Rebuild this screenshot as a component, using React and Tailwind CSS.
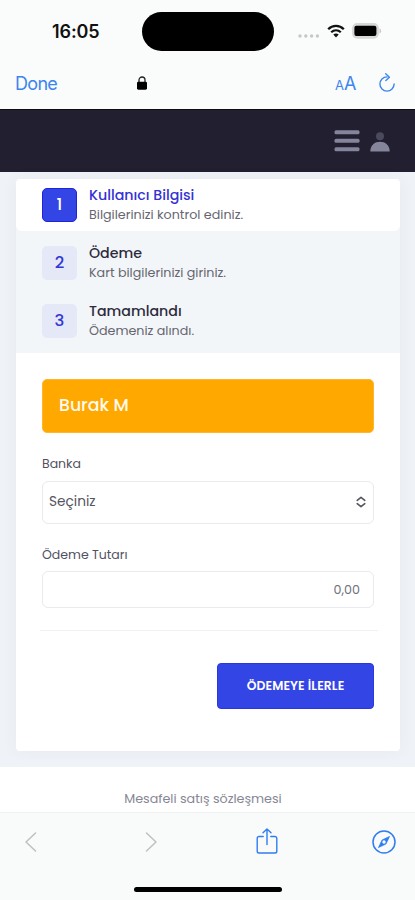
import React from 'react';
import { clsx } from 'clsx';

const steps = [
  { no: 1, title: 'Kullanıcı Bilgisi', desc: 'Bilgilerinizi kontrol ediniz.', active: true },
  { no: 2, title: 'Ödeme', desc: 'Kart bilgilerinizi giriniz.' },
  { no: 3, title: 'Tamamlandı', desc: 'Ödemeniz alındı.' },
];

const StatusBar = () => (
  <div className="h-[62px] flex items-center">
    <div className="w-[142px] pl-[52px] pt-[2px] text-[18px] leading-[20px] font-semibold text-[#111] tracking-[-0.1px]">16:05</div>
    <div className="w-[132px] h-[39px] mt-[1px] rounded-full bg-black" />
    <div className="flex items-center pl-[24px]">
      <svg width="22" height="6" viewBox="0 0 22 6" fill="#c6c8c8" className="mt-[9px]">
        <circle cx="2" cy="3" r="1.7" />
        <circle cx="7.8" cy="3" r="1.7" />
        <circle cx="13.6" cy="3" r="1.7" />
        <circle cx="19.4" cy="3" r="1.7" />
      </svg>
      <svg width="18" height="14" viewBox="0 0 18 14" fill="none" stroke="#111" className="ml-[7px]">
        <path d="M1.2 5.2C5.5 0.8 12.5 0.8 16.8 5.2" strokeWidth="2.3" />
        <path d="M4.2 8.3C7 5.6 11 5.6 13.8 8.3" strokeWidth="2.2" />
        <path d="M9 13.4L6.3 10.5C7.8 9.1 10.2 9.1 11.7 10.5Z" fill="#111" stroke="none" />
      </svg>
      <svg width="30" height="16" viewBox="0 0 30 16" className="ml-[7px]">
        <rect x="0.8" y="0.8" width="25.4" height="14.2" rx="4.4" fill="#d6d8d8" stroke="#d6d8d8" strokeWidth="1.4" />
        <rect x="2.4" y="2.8" width="22" height="10.2" rx="2" fill="#000" />
        <path d="M27.5 5.5v5c2.2-1 2.2-4 0-5Z" fill="#c6c8c8" />
      </svg>
    </div>
  </div>
);

const BrowserBar = () => (
  <div className="h-[47px] flex items-start text-[#3d85ee]">
    <span className="w-[137px] pl-[15px] pt-[11px] text-[18px] leading-[22px] tracking-[-0.7px]">Done</span>
    <svg width="10" height="14" viewBox="0 0 10 14" className="mt-[14px]">
      <path d="M2 7V4a3 3 0 0 1 6 0v3" fill="none" stroke="#222" strokeWidth="1.3" />
      <rect x="0" y="5.7" width="10" height="8" rx="1.4" fill="#000" />
    </svg>
    <div className="ml-auto flex items-baseline w-[43px] pt-[11px] leading-[22px]">
      <span className="text-[13px]">A</span>
      <span className="text-[18px]">A</span>
    </div>
    <svg width="18" height="20" viewBox="0 0 18 20" fill="none" stroke="currentColor" strokeWidth="1.4" className="mt-[11px] mr-[19px]">
      <path d="M9 3.9A7.1 7.1 0 1 0 16.1 11" strokeLinecap="round" />
      <path d="M7.7 0.8L11.4 4.2L7.9 7.6" strokeLinecap="round" strokeLinejoin="round" />
    </svg>
  </div>
);

const Navbar = () => (
  <div className="h-[63px] flex items-center justify-end bg-[#211f30] border-t border-[#0b0b10]">
    <svg width="26" height="22" viewBox="0 0 26 22" fill="#84849b">
      <rect x="0.5" y="0.3" width="25" height="4" rx="1.5" />
      <rect x="0.5" y="8.8" width="25" height="4" rx="1.5" />
      <rect x="0.5" y="17.2" width="25" height="4" rx="1.5" />
    </svg>
    <svg width="20" height="20" viewBox="0 0 20 20" className="ml-[10px] mr-[25px] mt-[1px]">
      <circle cx="10" cy="4.3" r="4" fill="#4b495c" />
      <path d="M0.3 19.5C0.3 13 5 9.8 10 9.8S19.7 13 19.7 19.5Z" fill="#84849b" />
    </svg>
  </div>
);

const Step = ({ no, title, desc, active }) => (
  <div className={clsx('flex pl-[26px]', active ? 'h-[52px] pt-[9px] bg-white rounded-[6px] mb-[6px]' : 'h-[58px] pt-[9px]')}>
    <div
      className={clsx(
        'w-[35px] h-[34px] pt-px rounded-[5px] flex items-center justify-center text-[16.5px] font-medium',
        active ? 'bg-[#3445e5] border border-[#2024d8] text-white' : 'bg-[#e5e8f7] text-[#3437d3]'
      )}
    >
      {no}
    </div>
    <div className="ml-[12px] whitespace-nowrap">
      <div className={clsx('text-[14.2px] leading-[15px] font-medium', active ? 'text-[#3431d6]' : 'text-[#2c2b3c]')}>{title}</div>
      <div className="mt-[4px] text-[12.7px] leading-[16px] text-[#65656f]">{desc}</div>
    </div>
  </div>
);

const PaymentForm = () => (
  <div className="px-[26px] pt-[26px]">
    <div className="h-[54px] rounded-[5px] bg-[#ffa800] border border-[#ffb62c] flex items-center pl-[16px] text-[17.3px] font-medium text-[#fffaf0]">
      Burak M
    </div>
    <label className="block mt-[22px] text-[12.5px] leading-[18px] text-[#51515f]">Banka</label>
    <div className="mt-[8px] h-[43px] rounded-[6px] border border-[#e8eaee] flex items-center justify-between pl-[6px] pr-[7px] text-[13.7px] text-[#55555f]">
      Seçiniz
      <svg width="10" height="12" viewBox="0 0 10 12" fill="none" stroke="#54545c" strokeWidth="1.6" strokeLinecap="round" strokeLinejoin="round" className="-mt-[1px]">
        <path d="M1.2 4.3L5 1.3L8.8 4.3" />
        <path d="M1.2 7.7L5 10.7L8.8 7.7" />
      </svg>
    </div>
    <label className="block mt-[22px] text-[12.5px] leading-[18px] text-[#51515f]">Ödeme Tutarı</label>
    <div className="mt-[7px] h-[37px] rounded-[6px] border border-[#e8eaee] flex items-center justify-end pr-[13px] text-[12.7px] text-[#70707a]">
      0,00
    </div>
    <div className="-ml-[2px] -mr-[4px] mt-[22px] border-t border-[#f0f1f3]" />
    <div className="flex justify-end mt-[32px]">
      <button className="w-[157px] h-[46px] pt-px rounded-[4px] bg-[#3445e5] border border-[#2b36de] text-white text-[12.4px] tracking-[0.1px] font-semibold">
        ÖDEMEYE İLERLE
      </button>
    </div>
  </div>
);

const BottomBar = () => (
  <div className="h-[88px] bg-[#f9fafa] border-t border-[#f0f1f1]">
    <div className="h-[57px] flex items-center pl-[25px] pr-[19px]">
      <svg width="12" height="20" viewBox="0 0 12 20" fill="none" stroke="#bec0c1" strokeWidth="1.5" strokeLinecap="round" strokeLinejoin="round">
        <path d="M10.5 1L1 10L10.5 19" />
      </svg>
      <svg width="12" height="20" viewBox="0 0 12 20" fill="none" stroke="#bec0c1" strokeWidth="1.5" strokeLinecap="round" strokeLinejoin="round" className="ml-[108px]">
        <path d="M1.5 1L11 10L1.5 19" />
      </svg>
      <svg width="22" height="28" viewBox="0 0 22 28" fill="none" stroke="#2f7df0" strokeWidth="1.4" strokeLinecap="round" strokeLinejoin="round" className="ml-[99px] -mt-[2px]">
        <path d="M7.2 9.5H3a1.8 1.8 0 0 0-1.8 1.8v12.9A1.8 1.8 0 0 0 3 26h16a1.8 1.8 0 0 0 1.8-1.8V11.3A1.8 1.8 0 0 0 19 9.5h-4.2" />
        <path d="M11 17.5V2M7 5.8L11 1.9L15 5.8" />
      </svg>
      <svg width="24" height="24" viewBox="0 0 24 24" fill="none" stroke="#2f7df0" className="ml-auto">
        <circle cx="12" cy="12" r="11" strokeWidth="1.5" />
        <path d="M17.5 6.5L13.9 14L6.5 17.5L10.1 10Z" fill="#2f7df0" strokeWidth="0.8" strokeLinejoin="round" />
        <circle cx="12" cy="12" r="1.7" fill="#f9fafa" stroke="none" />
      </svg>
    </div>
    <div className="w-[148px] h-[5px] rounded-full bg-black mt-[17px] ml-[134px]" />
  </div>
);

const App = () => {
  return (
    <div className="w-[415px] h-[900px] flex flex-col overflow-hidden bg-[#fafbfb] font-['Poppins','Inter',sans-serif]">
      <div className="font-['Inter',sans-serif]">
        <StatusBar />
        <BrowserBar />
      </div>
      <Navbar />
      <div className="flex flex-col">
        <div className="h-[595px] bg-[#eff3f7] pt-[7px] pl-[16px] pr-[15px]">
          <div className="h-[572px] rounded-[4px] bg-white shadow-[0_0_16px_rgba(80,80,90,0.05)]">
            <div className="h-[174px] bg-[#f3f6f9] rounded-t-[6px]">
              {steps.map((step) => (
                <Step key={step.no} {...step} />
              ))}
            </div>
            <PaymentForm />
          </div>
        </div>
        <div className="h-[45px] bg-white pt-[23px] pr-[9px] text-center text-[12.7px] leading-[17px] text-[#868694]">
          Mesafeli satış sözleşmesi
        </div>
      </div>
      <BottomBar />
    </div>
  );
};

export default App;
